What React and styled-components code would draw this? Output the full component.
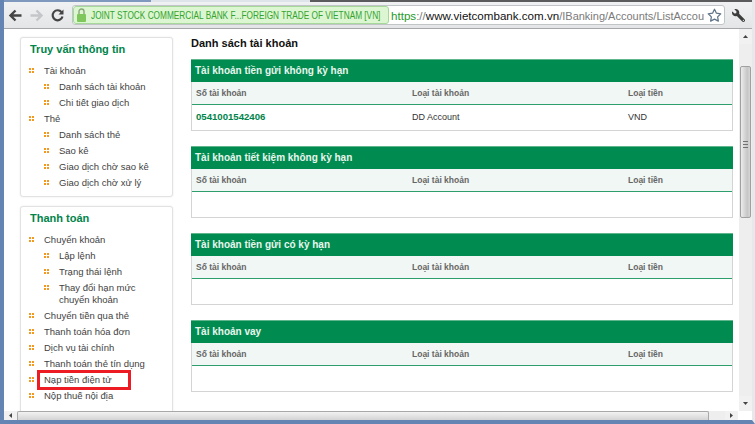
import styled, { createGlobalStyle } from "styled-components";
import { FaWrench } from "react-icons/fa";
import { FiStar } from "react-icons/fi";

const GlobalStyle = createGlobalStyle`
  html, body {
    margin: 0;
    padding: 0;
    background: #fff;
    overflow: hidden;
  }
  * { box-sizing: border-box; }
`;

const Frame = styled.div`
  width: 755px;
  height: 424px;
  display: flex;
  flex-direction: column;
  overflow: hidden;
  background: #6f8db8;
  border-left: 4px solid #6484b4;
  border-right: 3px solid #e6e8ec;
  border-bottom: 4px solid #6484b4;
  font-family: "Liberation Sans", Arial, sans-serif;
`;

const TopEdge = styled.div`
  height: 2px;
  margin: 0 -4px;
  background: linear-gradient(90deg, #7f98bd 0 20%, #dfe3ea 20% 41%, #5b5a5c 41% 100%);
  flex: none;
`;

const Toolbar = styled.div`
  height: 27px;
  flex: none;
  display: flex;
  align-items: center;
  gap: 2px;
  padding: 0 1px 0 2px;
  background: linear-gradient(#f0f1f3, #e4e5e7);
  border-bottom: 1px solid #a5a7aa;
`;

const NavButton = styled.div`
  width: 19px;
  height: 20px;
  display: flex;
  align-items: center;
  justify-content: center;
  flex: none;
`;

const UrlBar = styled.div`
  flex: 1;
  height: 20px;
  min-width: 0;
  display: flex;
  align-items: center;
  background: #fff;
  border: 1px solid #c2c5c8;
  border-radius: 3px;
  margin-left: 3px;
  overflow: hidden;
`;

const SecureBadge = styled.div`
  height: 18px;
  flex: none;
  width: 316px;
  display: flex;
  align-items: center;
  gap: 5px;
  padding-left: 3px;
  background: #dcf6d2;
  border: 1px solid #a5d89a;
  border-radius: 3px;
  color: #34a32f;
  font-size: 10.6px;
  white-space: nowrap;
  overflow: hidden;
`;

// the reference uses a narrow system font, so the text is squeezed to its width
const BadgeText = styled.span`
  display: inline-block;
  flex: none;
  width: 382px;
  margin-right: -84px;
  transform: scaleX(0.78);
  transform-origin: left center;
`;

const UrlText = styled.div`
  flex: 1;
  min-width: 0;
  padding-left: 2px;
  font-size: 11.6px;
  white-space: nowrap;
  overflow: hidden;
  color: #7a7a7a;

  b {
    font-weight: normal;
    color: #111;
  }
  i {
    font-style: normal;
    color: #1f9a1f;
  }
  em {
    font-style: normal;
    font-size: 11px;
  }
`;

const StarSlot = styled.div`
  flex: none;
  width: 20px;
  display: flex;
  align-items: center;
  justify-content: center;
  color: #5f7488;
  background: #fff;
`;

const WrenchSlot = styled.div`
  flex: none;
  width: 24px;
  display: flex;
  justify-content: center;
  color: #3c3c3c;
  font-size: 13px;
  transform: scaleX(-1);
`;

const Viewport = styled.div`
  flex: 1;
  min-height: 0;
  display: flex;
  background: #fff;
`;

const Page = styled.div`
  flex: 1;
  min-width: 0;
  overflow: hidden;
  display: flex;
  align-items: flex-start;
  gap: 18px;
  padding: 8px 6px 0 16px;
`;

const Sidebar = styled.div`
  width: 153px;
  flex: none;
  display: flex;
  flex-direction: column;
  gap: 9px;
`;

const MenuCard = styled.div`
  background: #fff;
  border: 1px solid #e2e2e2;
  border-radius: 3px;
  box-shadow: 0 0 2px #e8e8e8;
  padding: 4px 9px ${(p) => (p.$clipped ? 20 : 6)}px 9px;
`;

const MenuTitle = styled.div`
  font-size: 11px;
  font-weight: bold;
  color: #00844a;
  height: 15px;
  line-height: 15px;
  margin-bottom: 5px;
`;

const MenuList = styled.ul`
  list-style: none;
  margin: 0;
  padding: 0;
`;

const MenuItem = styled.li`
  position: relative;
  font-size: 9.5px;
  line-height: 12px;
  color: #3f3f3f;
  padding: 3px 0 1px ${(p) => (p.$sub ? 29 : 14)}px;
  width: ${(p) => (p.$wrap ? "124px" : "auto")};
  white-space: ${(p) => (p.$wrap ? "normal" : "nowrap")};
`;

const Bullet = styled.span`
  position: absolute;
  left: ${(p) => (p.$sub ? 14 : -1)}px;
  top: 6px;
  width: 5px;
  height: 5px;
  background:
    linear-gradient(#f39a1e, #f39a1e) 0 0 / 2px 2px no-repeat,
    linear-gradient(#f39a1e, #f39a1e) 3px 0 / 2px 2px no-repeat,
    linear-gradient(#f39a1e, #f39a1e) 0 3px / 2px 2px no-repeat,
    linear-gradient(#f39a1e, #f39a1e) 3px 3px / 2px 2px no-repeat;
`;

const Highlight = styled.span`
  position: absolute;
  left: 7px;
  top: -1px;
  width: 94px;
  height: 20px;
  border: 3px solid #ed1c24;
`;

const Main = styled.div`
  flex: 1;
  min-width: 0;
`;

const PageTitle = styled.div`
  font-size: 11px;
  font-weight: bold;
  color: #111;
  height: 12px;
  line-height: 12px;
  margin-bottom: 10px;
`;

const Section = styled.div`
  margin-bottom: 15px;
`;

const SectionHead = styled.div`
  height: 23px;
  line-height: 22px;
  background: #008c50;
  border-top: 1px solid #5fb58c;
  color: #e8f5ee;
  font-size: 10px;
  font-weight: bold;
  padding-left: 4px;
`;

const Table = styled.div`
  border: 1px solid #d4d4d4;
  border-top: none;
`;

const Columns = styled.div`
  display: grid;
  grid-template-columns: 216px 216px 1fr;
  align-items: center;
  padding-left: 4px;
`;

const HeadRow = styled(Columns)`
  height: 23px;
  background: #f1f7f5;
  border-bottom: 1px solid #2e9e6c;
  font-size: 8.5px;
  font-weight: bold;
  color: #666;
`;

const BodyRow = styled(Columns)`
  height: 25px;
  padding-bottom: 1px;
  font-size: 9px;
  color: #333;

  a {
    margin-top: -2px;
    color: #00844a;
    font-size: 9.6px;
    font-weight: bold;
    text-decoration: none;
  }
`;

const VScroll = styled.div`
  width: 13px;
  flex: none;
  display: flex;
  flex-direction: column;
  background: #eeeeee;
`;

const ScrollArrow = styled.div`
  height: 15px;
  flex: none;
  display: flex;
  align-items: center;
  justify-content: center;
  background: #f1f1f1;
`;

const VThumb = styled.div`
  margin: 22px 1px 0 1px;
  height: 152px;
  flex: none;
  display: flex;
  align-items: center;
  justify-content: center;
  background: linear-gradient(90deg, #ececec, #c6c6c6 70%, #d6d6d6);
  border: 1px solid #a0a0a0;
  border-radius: 2px;
`;

const Gripper = styled.div`
  width: 5px;
  height: 7px;
  margin-top: 4px;
  background: repeating-linear-gradient(#707070 0 1px, transparent 1px 3px);
`;

const VTrack = styled.div`
  flex: 1;
`;

const HScrollRow = styled.div`
  height: 9px;
  flex: none;
  display: flex;
  align-items: stretch;
  background: #eeeeee;
`;

const HArrow = styled.div`
  width: 13px;
  flex: none;
  display: flex;
  align-items: center;
  justify-content: center;
  background: #f1f1f1;
`;

const HThumb = styled.div`
  width: 692px;
  flex: none;
  background: linear-gradient(#f2f2f2, #d4d4d4);
  border: 1px solid #a8a8a8;
  border-bottom: none;
  border-radius: 2px 2px 0 0;
`;

const HTrack = styled.div`
  flex: 1;
`;

const Corner = styled.div`
  width: 14px;
  flex: none;
  background: #fff;
`;

const menuOne = [
  { label: "Tài khoản" },
  { label: "Danh sách tài khoản", sub: true },
  { label: "Chi tiết giao dịch", sub: true },
  { label: "Thẻ" },
  { label: "Danh sách thẻ", sub: true },
  { label: "Sao kê", sub: true },
  { label: "Giao dịch chờ sao kê", sub: true },
  { label: "Giao dịch chờ xử lý", sub: true },
];

const menuTwo = [
  { label: "Chuyển khoản" },
  { label: "Lập lệnh", sub: true },
  { label: "Trạng thái lệnh", sub: true },
  { label: "Thay đổi hạn mức chuyển khoản", sub: true, wrap: true },
  { label: "Chuyển tiền qua thẻ" },
  { label: "Thanh toán hóa đơn" },
  { label: "Dịch vụ tài chính" },
  { label: "Thanh toán thẻ tín dụng" },
  { label: "Nạp tiền điện tử", marked: true },
  { label: "Nộp thuế nội địa" },
];

const sections = [
  { title: "Tài khoản tiền gửi không kỳ hạn", row: ["0541001542406", "DD Account", "VND"] },
  { title: "Tài khoản tiết kiệm không kỳ hạn" },
  { title: "Tài khoản tiền gửi có kỳ hạn" },
  { title: "Tài khoản vay" },
];

const Menu = ({ title, items, clipped }) => (
  <MenuCard $clipped={clipped}>
    <MenuTitle>{title}</MenuTitle>
    <MenuList>
      {items.map((item) => (
        <MenuItem key={item.label} $sub={item.sub} $wrap={item.wrap}>
          <Bullet $sub={item.sub} />
          {item.marked && <Highlight />}
          {item.label}
        </MenuItem>
      ))}
    </MenuList>
  </MenuCard>
);

const BackIcon = ({ color }) => (
  <svg width="15" height="15" viewBox="0 0 15 15">
    <path d="M13.5 7.5H3M7.5 2.5l-5 5 5 5" fill="none" stroke={color} strokeWidth="2.4" />
  </svg>
);

const ForwardIcon = ({ color }) => (
  <svg width="15" height="15" viewBox="0 0 15 15">
    <path d="M1.5 7.5H12M7.5 2.5l5 5-5 5" fill="none" stroke={color} strokeWidth="2.4" />
  </svg>
);

const ReloadIcon = () => (
  <svg width="15" height="15" viewBox="0 0 15 15">
    <path d="M11.6 4.2A5 5 0 1 0 12.5 8.5" fill="none" stroke="#444" strokeWidth="2.2" />
    <path d="M13.5 1.5v5h-5z" fill="#444" />
  </svg>
);

const LockIcon = () => (
  <svg width="9" height="14" viewBox="0 0 9 14" style={{ flex: "none" }}>
    <path d="M2 6.5V3.5a2.5 2.5 0 0 1 5 0V6.5" fill="none" stroke="#8aa878" strokeWidth="1.4" />
    <rect x="0" y="6" width="9" height="8" rx="1" fill="#7fc65c" />
  </svg>
);

const Triangle = ({ d }) => (
  <svg width="7" height="7" viewBox="0 0 7 7">
    <path d={d} fill="#444" />
  </svg>
);

const App = () => {
  return (
    <Frame>
      <GlobalStyle />
      <TopEdge />
      <Toolbar>
        <NavButton><BackIcon color="#444" /></NavButton>
        <NavButton><ForwardIcon color="#c4c6c9" /></NavButton>
        <NavButton><ReloadIcon /></NavButton>
        <UrlBar>
          <SecureBadge>
            <LockIcon />
            <BadgeText>JOINT STOCK COMMERCIAL BANK F...FOREIGN TRADE OF VIETNAM [VN]</BadgeText>
          </SecureBadge>
          <UrlText>
            <i>https</i>://<b>www.vietcombank.com.vn</b><em>/IBanking/Accounts/ListAccou</em>
          </UrlText>
          <StarSlot><FiStar size={15} /></StarSlot>
        </UrlBar>
        <WrenchSlot><FaWrench /></WrenchSlot>
      </Toolbar>
      <Viewport>
        <Page>
          <Sidebar>
            <Menu title="Truy vấn thông tin" items={menuOne} />
            <Menu title="Thanh toán" items={menuTwo} clipped />
          </Sidebar>
          <Main>
            <PageTitle>Danh sách tài khoản</PageTitle>
            {sections.map((section) => (
              <Section key={section.title}>
                <SectionHead>{section.title}</SectionHead>
                <Table>
                  <HeadRow>
                    <span>Số tài khoản</span>
                    <span>Loại tài khoản</span>
                    <span>Loại tiền</span>
                  </HeadRow>
                  {section.row ? (
                    <BodyRow>
                      <a href="#account">{section.row[0]}</a>
                      <span>{section.row[1]}</span>
                      <span>{section.row[2]}</span>
                    </BodyRow>
                  ) : (
                    <BodyRow />
                  )}
                </Table>
              </Section>
            ))}
          </Main>
        </Page>
        <VScroll>
          <ScrollArrow><Triangle d="M3.5 2L6 5H1z" /></ScrollArrow>
          <VThumb><Gripper /></VThumb>
          <VTrack />
          <ScrollArrow><Triangle d="M1 2h5L3.5 5z" /></ScrollArrow>
        </VScroll>
      </Viewport>
      <HScrollRow>
        <HArrow><Triangle d="M5 1v5L2 3.5z" /></HArrow>
        <HThumb />
        <HTrack />
        <HArrow><Triangle d="M2 1v5l3-2.5z" /></HArrow>
        <Corner />
      </HScrollRow>
    </Frame>
  );
};

export default App;
